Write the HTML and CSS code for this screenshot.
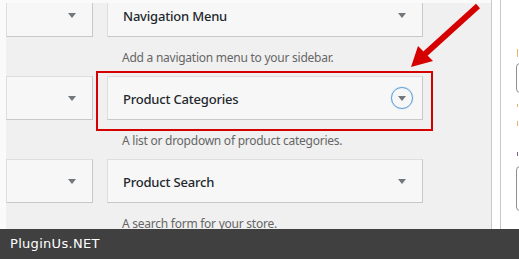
FILE: index.html
```html
<!DOCTYPE html>
<html lang="en">
<head>
    <meta charset="UTF-8">
    <title>Widgets</title>
    <link rel="stylesheet" href="styles.css">
</head>
<body>
    <div class="screen">
        <!-- Available widgets -->
        <div class="widgets">
            <div class="widget-list">
                <div class="row">
                    <div class="widget"><span class="toggle"></span></div>
                    <div class="widget-item">
                        <div class="widget"><h3>Navigation Menu</h3><span class="toggle"></span></div>
                        <p class="desc">Add a navigation menu to your sidebar.</p>
                    </div>
                </div>
                <div class="row">
                    <div class="widget"><span class="toggle"></span></div>
                    <div class="widget-item highlight">
                        <div class="widget"><h3>Product Categories</h3><span class="toggle focus"></span></div>
                        <p class="desc">A list or dropdown of product categories.</p>
                    </div>
                </div>
                <div class="row">
                    <div class="widget"><span class="toggle"></span></div>
                    <div class="widget-item">
                        <div class="widget"><h3>Product Search</h3><span class="toggle"></span></div>
                        <p class="desc">A search form for your store.</p>
                    </div>
                </div>
            </div>
        </div>

        <!-- Sidebar areas -->
        <div class="sidebar">
            <div class="panel">
                <span class="mark orange m1"></span>
                <span class="field f1"></span>
                <span class="mark orange m2"></span>
                <span class="mark orange m3"></span>
                <span class="mark purple m4"></span>
                <span class="field f2"></span>
            </div>
        </div>
    </div>

    <svg class="pointer" width="519" height="259" viewBox="0 0 519 259">
        <line x1="478" y1="6" x2="425" y2="54" stroke="#d50000" stroke-width="6"/>
        <polygon points="411,67 418,46 433,61" fill="#d50000"/>
    </svg>

    <div class="watermark">PluginUs.NET</div>
</body>
</html>
```

FILE: styles.css
```css
body {
    margin: 0;
    width: 519px;
    height: 259px;
    overflow: hidden;
    position: relative;
    background-color: #fafafa;
    font-family: "Noto Sans", "Open Sans", sans-serif;
    color: #23282d;
}
.screen {
    display: flex;
    height: 256px;
    padding-top: 3px;
}
.widgets {
    width: 485px;
    margin-left: 6px;
    background-color: #f0f0f0;
    overflow: hidden;
}
.widget-list {
    margin-top: -10px;
}
.row {
    display: grid;
    grid-template-columns: 87px 316px;
    column-gap: 14px;
    align-items: start;
}
.widget-item {
    position: relative;
}
.widget {
    position: relative;
    box-sizing: border-box;
    height: 44px;
    display: flex;
    align-items: center;
    padding: 0 15px;
    background-color: #f7f7f7;
    border: 1px solid #dedede;
    border-right-color: #c8c8c8;
    border-bottom-color: #c8c8c8;
}
.widget h3 {
    margin: 0;
    padding-top: 1px;
    font-size: 13px;
    font-weight: 500;
    letter-spacing: -0.2px;
    color: #23282d;
}
.toggle {
    position: absolute;
    right: 9px;
    top: 10px;
    width: 22px;
    height: 22px;
    box-sizing: border-box;
    border-radius: 50%;
}
.toggle::before {
    content: "";
    position: absolute;
    left: 7px;
    top: 9px;
    border-top: 5px solid #72777c;
    border-left: 4px solid transparent;
    border-right: 4px solid transparent;
}
.toggle.focus {
    border: 1px solid #5b9dd9;
    box-shadow: 0 0 1px rgba(30, 140, 190, 0.6);
}
.toggle.focus::before {
    left: 6px;
    top: 8px;
}
.desc {
    margin: 0;
    padding: 12px 0 9px 15px;
    height: 18px;
    line-height: 18px;
    font-size: 12px;
    letter-spacing: -0.25px;
    color: #666;
}
/* Cadre rouge autour du widget */
.highlight::before {
    content: "";
    position: absolute;
    top: -5px;
    left: -11px;
    width: 333px;
    height: 56px;
    border: 2px solid #d50000;
}
.sidebar {
    flex: 1;
    display: flex;
    background-color: #fff;
    border-left: 1px solid #c8c8c8;
    margin-top: -3px;
    padding-left: 8px;
}
.panel {
    flex: 1;
    position: relative;
    border-left: 1px solid #c8c8c8;
}
.mark {
    position: absolute;
    left: 16px;
    width: 1px;
}
.orange { background-color: #f0b070; }
.purple { background-color: #8a5a9a; }
.m1 { top: 49px; height: 8px; }
.m2 { top: 104px; height: 3px; }
.m3 { top: 121px; height: 5px; }
.m4 { top: 152px; height: 4px; }
.field {
    position: absolute;
    left: 15px;
    width: 10px;
    border: 1px solid #8c8f94;
    border-radius: 4px;
}
.f1 { top: 63px; height: 28px; }
.f2 { top: 166px; height: 43px; }
.pointer {
    position: absolute;
    left: 0;
    top: 0;
    pointer-events: none;
}
.watermark {
    position: absolute;
    left: 0;
    bottom: 0;
    width: 100%;
    height: 30px;
    line-height: 30px;
    padding-left: 10px;
    box-sizing: border-box;
    background-color: #404040;
    color: #fff;
    font-family: "DejaVu Sans", sans-serif;
    font-size: 13px;
    letter-spacing: 0.3px;
}
```
